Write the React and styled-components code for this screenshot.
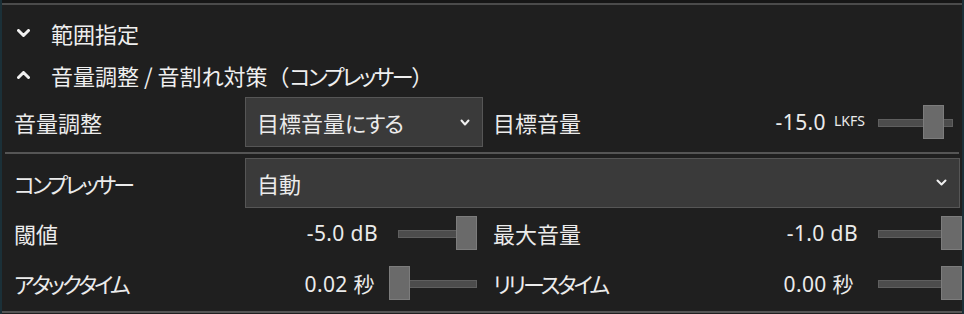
import styled, { createGlobalStyle } from "styled-components";

const GlobalStyle = createGlobalStyle`
  html, body {
    margin: 0;
    padding: 0;
    background: #1f1f1f;
  }
  body {
    font-family: "Noto Sans CJK JP", "Noto Sans", sans-serif;
    color: #ebebeb;
  }
`;

const Panel = styled.div`
  width: 964px;
  height: 314px;
  box-sizing: border-box;
  background: #1f1f1f;
  border-left: 2px solid #1b3038;
  border-right: 2px solid #1b3038;
  overflow: hidden;
  font-size: 22px;
`;

const TopBar = styled.div`
  height: 3px;
  background: #161616;
  border-bottom: 2px solid #4b4b4b;
  margin-bottom: 7px;
`;

const SectionHeader = styled.div`
  display: flex;
  align-items: center;
  height: 42px;
  padding-left: 15px;
  gap: 21px;
  color: #efefef;
`;

const Kana = styled.span`
  font-feature-settings: "palt";
  letter-spacing: ${({ $ls }) => ($ls === undefined ? -3 : $ls)}px;
`;

const Row = styled.div`
  display: grid;
  grid-template-columns: 243px 238px 1fr;
  align-items: center;
  height: ${({ $h }) => $h || 50}px;
  padding-top: ${({ $pt }) => $pt || 0}px;
`;

const Label = styled.div`
  padding-left: 12px;
  white-space: nowrap;
`;

const Select = styled.div`
  display: flex;
  align-items: center;
  justify-content: space-between;
  box-sizing: border-box;
  height: 50px;
  padding: 0 12px 0 11px;
  background: #3a3a3a;
  border: 1px solid #565656;
  grid-column: ${({ $wide }) => ($wide ? "2 / 4" : "auto")};
  margin-right: ${({ $wide }) => ($wide ? 2 : 0)}px;
  white-space: nowrap;
`;

const ValueCell = styled.div`
  display: flex;
  align-items: center;
  justify-content: flex-end;
  padding-right: 6px;
`;

const RightCell = styled.div`
  display: flex;
  align-items: center;
  padding-left: 10px;
`;

const Spacer = styled.div`
  flex: 1;
`;

const Value = styled.span`
  font-family: "Noto Sans", "Noto Sans CJK JP", sans-serif;
  font-size: 21px;
  letter-spacing: 0.4px;
  white-space: nowrap;
  margin-right: ${({ $gap }) => $gap}px;
`;

const Unit = styled.span`
  font-size: 14px;
  letter-spacing: 0;
  margin-left: 8px;
  vertical-align: 4px;
`;

const SliderBox = styled.div`
  position: relative;
  width: ${({ $w }) => $w}px;
  height: 34px;
  margin-right: ${({ $mr }) => $mr || 0}px;
  flex-shrink: 0;
`;

const Track = styled.div`
  position: absolute;
  left: ${({ $inset }) => $inset}px;
  right: 0;
  top: 14px;
  height: 6px;
  background: #4c4c4c;
  border: 1px solid #5f5f5f;
`;

const Thumb = styled.div`
  position: absolute;
  top: 0;
  width: 19px;
  height: 32px;
  background: #6a6a6a;
  border: 1px solid #7c7c7c;
`;

const Divider = styled.div`
  height: 2px;
  background: #555;
  margin: 4px 3px 0 3px;
`;

const BottomLine = styled.div`
  height: 2px;
  background: #555;
  margin-top: 3px;
`;

function Chevron({ up, size = 13, h = 8, stroke = 3 }) {
  const pts = up
    ? `1.5,${h - 1.5} ${size / 2},1.5 ${size - 1.5},${h - 1.5}`
    : `1.5,1.5 ${size / 2},${h - 1.5} ${size - 1.5},1.5`;
  return (
    <svg width={size} height={h} viewBox={`0 0 ${size} ${h}`}>
      <polyline points={pts} fill="none" stroke="#f0f0f0" strokeWidth={stroke} strokeLinecap="round" strokeLinejoin="round" />
    </svg>
  );
}

function Slider({ width, value, inset = 0, mr }) {
  const left = Math.round(value * (width - 21));
  return (
    <SliderBox $w={width} $mr={mr}>
      <Track $inset={inset} />
      <Thumb style={{ left }} />
    </SliderBox>
  );
}

export default function App() {
  return (
    <>
      <GlobalStyle />
      <Panel>
        <TopBar />
        <SectionHeader>
          <Chevron />
          <span>範囲指定</span>
        </SectionHeader>
        <SectionHeader>
          <Chevron up />
          <span>
            音量調整 / 音割<Kana $ls={0}>れ</Kana>対策（<Kana $ls={-2.5}>コンプレッサー</Kana>）
          </span>
        </SectionHeader>

        <Row $h={52}>
          <Label>音量調整</Label>
          <Select>
            <span>
              目標音量<Kana $ls={-1}>にする</Kana>
            </span>
            <Chevron size={10} h={7} stroke={2} />
          </Select>
          <RightCell>
            <span>目標音量</span>
            <Spacer />
            <Value $gap={13}>
              -15.0<Unit>LKFS</Unit>
            </Value>
            <Slider width={75} value={0.83} mr={9} />
          </RightCell>
        </Row>
        <Divider />

        <Row $h={51} $pt={3}>
          <Label>
            <Kana>コンプレッサー</Kana>
          </Label>
          <Select $wide>
            <span>自動</span>
            <Chevron size={11} h={7} stroke={2} />
          </Select>
        </Row>

        <Row>
          <Label>閾値</Label>
          <ValueCell>
            <Value $gap={11}>-5.0 dB</Value>
            <Slider width={88} value={1} inset={9} />
          </ValueCell>
          <RightCell>
            <span>最大音量</span>
            <Spacer />
            <Value $gap={20}>-1.0 dB</Value>
            <Slider width={84} value={1} />
          </RightCell>
        </Row>

        <Row>
          <Label>
            <Kana>アタックタイム</Kana>
          </Label>
          <ValueCell>
            <Value $gap={14}>0.02 秒</Value>
            <Slider width={88} value={0} inset={9} />
          </ValueCell>
          <RightCell>
            <Kana>リリースタイム</Kana>
            <Spacer />
            <Value $gap={24}>0.00 秒</Value>
            <Slider width={84} value={1} />
          </RightCell>
        </Row>
        <BottomLine />
      </Panel>
    </>
  );
}
